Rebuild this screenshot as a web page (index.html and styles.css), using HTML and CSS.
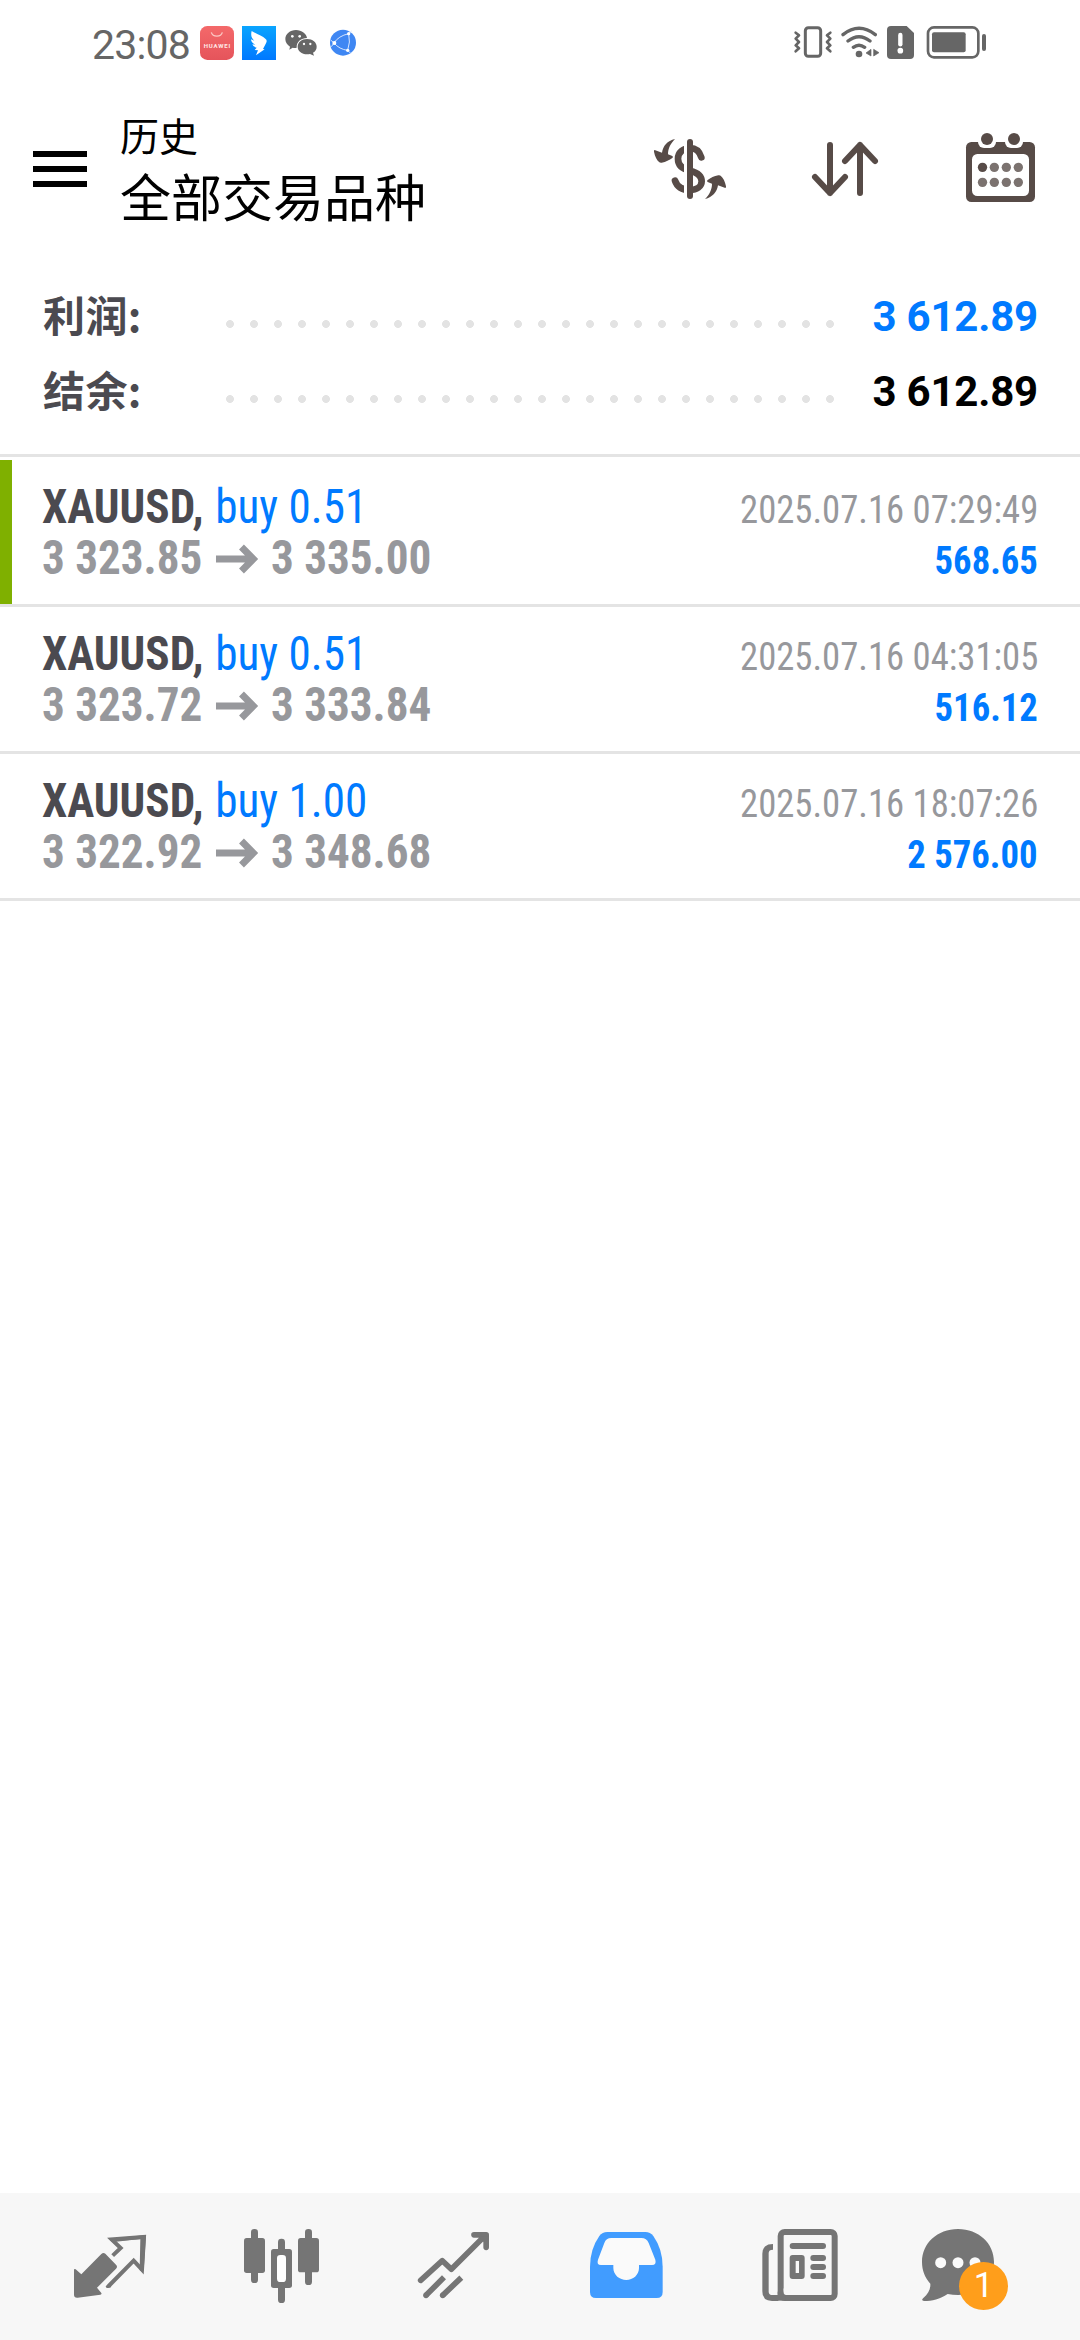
FILE: index.html
```html
<!DOCTYPE html>
<html lang="zh-CN">
<head>
<meta charset="utf-8">
<title>历史</title>
<link rel="stylesheet" href="styles.css">
</head>
<body>
<div class="screen">
  <div class="status">
    <span class="clock">23:08</span>
    <div class="status-group">
      <svg width="34" height="36" viewBox="360 45 102 108">
        <defs><linearGradient id="hw" x1="0" y1="0" x2="0" y2="1"><stop offset="0" stop-color="#f4696a"/><stop offset="1" stop-color="#e5545b"/></linearGradient></defs>
        <rect x="360" y="48" width="102" height="102" rx="22" fill="url(#hw)"/>
        <path d="M394 67a17 15 0 0 0 33 0" fill="none" stroke="#fbc8c4" stroke-width="4"/>
        <text x="411" y="113" text-anchor="middle" class="hw-text" textLength="80">HUAWEI</text>
      </svg>
      <svg width="34" height="36" viewBox="486 45 102 108">
        <defs><linearGradient id="dt" x1="0" y1="0" x2="0" y2="1"><stop offset="0" stop-color="#0aa5ff"/><stop offset="1" stop-color="#0078ff"/></linearGradient></defs>
        <rect x="486" y="48" width="102" height="102" fill="url(#dt)"/>
        <path d="M515 63C530 72 548 78 556 86Q563 91 558 100L549 117L554 118L528 136L534 121L524 120L530 113Q520 112 517 103L526 104Q513 98 513 88L523 92Q510 82 515 63Z" fill="#fff"/>
      </svg>
      <svg width="34" height="36" viewBox="612 45 102 108">
        <path d="M648 60C665 60 680 72 681 84C664 84 649 95 650 113C646 115 642 114 638 113L628 119L630 110C621 104 616 97 616 87C616 72 630 60 648 60Z" fill="#666"/>
        <path d="M681 87C698 87 710 97 710 110C710 118 706 124 699 128L702 137L690 132C668 136 653 124 653 110C653 97 665 87 681 87Z" fill="#666"/>
        <g fill="#fff"><circle cx="637" cy="79" r="4"/><circle cx="659" cy="79" r="4"/><circle cx="672" cy="102" r="3.5"/><circle cx="691" cy="102" r="3.5"/></g>
      </svg>
      <svg width="34" height="36" viewBox="738 45 102 108">
        <circle cx="789" cy="98" r="39" fill="#3f87f3"/>
        <g fill="none" stroke="#d5e5ff" stroke-width="3"><path d="M752 90L762 99Q775 78 806 71L815 63M762 99Q778 118 803 121L812 130M806 71Q812 96 803 121M762 99L754 110"/></g>
        <g fill="#fff"><circle cx="763" cy="99" r="6"/><circle cx="806" cy="71" r="5"/><circle cx="803" cy="121" r="5"/></g>
      </svg>
    </div>
    <div class="status-group status-right">
      <svg width="40" height="36" viewBox="39 45 120 108">
        <g fill="none" stroke="#666" stroke-linejoin="round" stroke-linecap="round"><rect x="76" y="53" width="46" height="86" rx="9" stroke-width="9"/><path d="M47 68L57 76L47 86L57 96L47 106L57 115L47 124M151 68L141 76L151 86L141 96L151 106L141 115L151 124" stroke-width="8"/></g>
      </svg>
      <svg width="40" height="36" viewBox="180 45 120 108">
        <g fill="none" stroke="#666" stroke-width="10" stroke-linecap="round"><path d="M189 74Q237 36 286 74M204 93Q237 67 270 93M220 112Q237 99 254 112"/></g>
        <circle cx="237" cy="132" r="10" fill="#666"/><path d="M273 118V138L258 129ZM281 118V138L297 128Z" fill="#666" stroke="#666" stroke-width="2"/>
      </svg>
      <svg width="27" height="36" viewBox="321 45 81 108">
        <path d="M333 48H380L402 69V135Q402 147 390 147H333Q321 147 321 135V60Q321 48 333 48Z" fill="#666"/>
        <path d="M361 75V103" stroke="#fff" stroke-width="13" stroke-linecap="round"/><circle cx="361" cy="122" r="8.5" fill="#fff"/>
      </svg>
      <svg width="66" height="36" viewBox="423 45 198 108">
        <rect x="444" y="52" width="151" height="90" rx="18" fill="none" stroke="#666" stroke-width="8"/><rect x="456" y="67" width="101" height="60" rx="6" fill="#666"/><rect x="606" y="72" width="12" height="51" rx="6" fill="#666"/>
      </svg>
    </div>
  </div>

  <header class="header">
    <div class="menu"><i></i><i></i><i></i></div>
    <div class="titles">
      <div class="title">历史</div>
      <div class="subtitle">全部交易品种</div>
    </div>
    <div class="actions">
      <svg width="90" height="90" viewBox="45 42 270 270">
        <path d="M214 142C208 122 194 114 180 114C160 114 144 128 144 146C144 168 162 178 180 182C200 187 215 196 215 214C215 230 200 240 180 240C158 240 141 230 135 212" fill="none" stroke="#574b47" stroke-width="20" stroke-linecap="round"/>
        <rect x="162" y="90" width="10" height="174" fill="#fff"/>
        <rect x="171" y="87" width="18" height="180" rx="9" fill="#574b47"/>
        <path id="swap" d="M135 87C112 92 99 108 96 128L74 120Q71 121 72 125C75 140 80 150 88 157Q91 159 95 158C108 156 118 150 127 144Q131 141 127 138L114 133C114 115 122 100 135 87Z" fill="#574b47"/>
        <use href="#swap" transform="rotate(180 180 177)"/>
      </svg>
      <svg width="90" height="90" viewBox="513 42 270 270">
        <path d="M603 105V249M558 201L603 249L648 201M693 249V105M648 153L693 105L738 153" fill="none" stroke="#574b47" stroke-width="18" stroke-linecap="round" stroke-linejoin="round"/>
      </svg>
      <svg width="90" height="90" viewBox="975 42 270 270">
        <rect x="1008" y="96" width="207" height="180" rx="16" fill="#574b47"/>
        <rect x="1026" y="132" width="171" height="126" rx="16" fill="#fff"/>
        <rect x="1044" y="70" width="54" height="44" rx="18" fill="#fff"/><rect x="1125" y="70" width="54" height="44" rx="18" fill="#fff"/>
        <g fill="#574b47"><circle cx="1071" cy="87" r="18"/><circle cx="1152" cy="87" r="18"/><circle cx="1057.500" cy="172" r="14"/></g>
        <g fill="#7b726f"><circle cx="1093" cy="172" r="14"/><circle cx="1129" cy="172" r="14"/><circle cx="1165" cy="172" r="14"/><circle cx="1057.500" cy="217" r="14"/><circle cx="1093" cy="217" r="14"/><circle cx="1129" cy="217" r="14"/><circle cx="1165" cy="217" r="14"/></g>
      </svg>
    </div>
  </header>

  <section class="summary">
    <div class="sum-row"><span class="sum-label">利润:</span><span class="leader"></span><span class="sum-value blue">3 612.89</span></div>
    <div class="sum-row"><span class="sum-label">结余:</span><span class="leader"></span><span class="sum-value">3 612.89</span></div>
  </section>

  <main class="deals">
    <article class="deal marked">
      <div class="line"><span class="symbol"><b>XAUUSD,</b> <span class="side">buy 0.51</span></span><span class="time">2025.07.16 07:29:49</span></div>
      <div class="line"><span class="prices">3 323.85<svg class="arrow" width="45" height="30" viewBox="0 0 43 30" preserveAspectRatio="none"><path d="M0 15H38M26 3L38 15L26 27"/></svg>3 335.00</span><span class="profit">568.65</span></div>
    </article>
    <article class="deal">
      <div class="line"><span class="symbol"><b>XAUUSD,</b> <span class="side">buy 0.51</span></span><span class="time">2025.07.16 04:31:05</span></div>
      <div class="line"><span class="prices">3 323.72<svg class="arrow" width="45" height="30" viewBox="0 0 43 30" preserveAspectRatio="none"><path d="M0 15H38M26 3L38 15L26 27"/></svg>3 333.84</span><span class="profit">516.12</span></div>
    </article>
    <article class="deal">
      <div class="line"><span class="symbol"><b>XAUUSD,</b> <span class="side">buy 1.00</span></span><span class="time">2025.07.16 18:07:26</span></div>
      <div class="line"><span class="prices">3 322.92<svg class="arrow" width="45" height="30" viewBox="0 0 43 30" preserveAspectRatio="none"><path d="M0 15H38M26 3L38 15L26 27"/></svg>3 348.68</span><span class="profit">2 576.00</span></div>
    </article>
  </main>

  <nav class="tabs">
    <div class="tab">
      <svg viewBox="-48 39 516 441">
        <path d="M102 269Q103 265 107 268L124 283L184 222Q190 216 196 221L228 254Q234 260 228 266L171 323L184 339Q186 343 181 344L113 353Q102 354 102 344Z" fill="#757575"/>
        <path d="M218 227L242 204L215 178L312 171L306 269L281 242L206 318" fill="none" stroke="#757575" stroke-width="12"/>
        <path d="M209 176L318 165L311 272Q304 277 299 270L301 177L228 185L224 192L210 181ZM197 319Q202 313 206 312L214 320Q208 326 199 323Z" fill="#757575"/>
      </svg>
    </div>
    <div class="tab">
      <svg viewBox="468 39 516 441">
        <g fill="#757575"><rect x="633" y="147" width="21" height="162" rx="10"/><rect x="612" y="174" width="63" height="105" rx="8"/><rect x="714" y="176" width="21" height="50" rx="10"/><rect x="714" y="310" width="21" height="59" rx="10"/><rect x="693" y="207" width="63" height="117" rx="8"/><rect x="795" y="147" width="21" height="168" rx="10"/><rect x="774" y="174" width="63" height="103" rx="8"/></g>
        <rect x="711" y="225" width="27" height="81" rx="10" fill="#fff"/>
      </svg>
    </div>
    <div class="tab">
      <svg viewBox="-36 39 516 441">
        <path d="M122 301L187 242L214 268L314 168M282 164.500H318.500V202" fill="none" stroke="#757575" stroke-width="17" stroke-linecap="round" stroke-linejoin="round"/>
        <path d="M296 170H322V196Z" fill="#757575"/>
        <path d="M138 346L192 292M188 346L244 293" stroke="#757575" stroke-width="17"/><circle cx="138" cy="346" r="8.500" fill="#757575"/><circle cx="188" cy="346" r="8.500" fill="#757575"/>
      </svg>
    </div>
    <div class="tab">
      <svg viewBox="480 39 516 441">
        <path d="M682 156H796Q811 156 820 168Q848 208 848 260V336Q848 354 830 354H648Q630 354 630 336V260Q630 208 658 168Q667 156 682 156Z" fill="#419cff"/>
        <path d="M694 174H784Q800 174 806 189L826 239Q830 255 816 255H777V264C777 285 759 300 739 300C719 300 700 285 700 264V255H663Q649 255 654 239L673 189Q678 174 694 174Z" fill="#fafafa"/>
      </svg>
    </div>
    <div class="tab">
      <svg viewBox="-24 39 516 441">
        <path d="M159 192V209Q146 209 146 219V335Q146 345 158 345H175V363H156Q127 363 127 334V221Q127 192 159 192Z" fill="#757575"/>
        <rect x="182" y="156" width="162" height="198" rx="12" fill="none" stroke="#757575" stroke-width="18"/>
        <rect x="173" y="335" width="24" height="27" fill="#757575"/><rect x="191" y="320" width="20" height="25" rx="8" fill="#f7f7f7"/>
        <g fill="#757575"><rect x="209" y="189" width="109" height="18" rx="9"/><rect x="271" y="225" width="47" height="18" rx="9"/><rect x="271" y="252" width="47" height="18" rx="9"/><rect x="271" y="279" width="47" height="18" rx="9"/><path fill-rule="evenodd" d="M218 225H245Q254 225 254 234V288Q254 297 245 297H218Q209 297 209 288V234Q209 225 218 225ZM227 243V279H237V243Z"/></g>
      </svg>
    </div>
    <div class="tab chat">
      <svg viewBox="492 39 516 441">
        <path d="M714 147C776 147 822 190 822 246C822 302 776 345 714 345Q698 345 683 342C660 358 636 363 612 363Q602 361 610 354C625 341 632 328 631 311C614 293 606 270 606 246C606 190 652 147 714 147Z" fill="#757575"/>
        <g fill="#fafafa"><circle cx="662" cy="248" r="16.500"/><circle cx="714" cy="248" r="16.500"/><circle cx="765" cy="248" r="16.500"/></g>
      </svg>
      <span class="badge">1</span>
    </div>
  </nav>
</div>
</body>
</html>
```
FILE: styles.css
```css
* { box-sizing: border-box; }
body { margin: 0; background: #fff; font-family: Roboto, "Noto Sans CJK SC", sans-serif; color: #000; }
svg { display: block; flex: none; }
.screen { width: 1080px; height: 2340px; display: flex; flex-direction: column; overflow: hidden; }

.status { height: 86px; display: flex; align-items: center; padding: 0 93px 0 92px; }
.clock { width: 108px; padding-top: 3px; font-size: 41px; line-height: 48px; letter-spacing: -0.8px; color: #666; }
.status-group { display: flex; gap: 8px; }
.status-right { margin-left: auto; gap: 7px; }
.hw-text { font: 700 18px Roboto, sans-serif; fill: #ffe9e7; }

.header { height: 166px; display: flex; align-items: center; padding: 0 35px 0 33px; }
.menu { width: 54px; display: flex; flex-direction: column; gap: 9px; }
.menu i { height: 6px; background: #000; }
.titles { margin-left: 33px; padding-bottom: 4px; font-family: "Noto Sans CJK SC", sans-serif; }
.title { font-size: 39px; line-height: 56px; }
.subtitle { font-size: 51px; line-height: 66px; }
.actions { margin-left: auto; display: flex; gap: 65px; }

.summary { height: 205px; padding: 26px 42px 0; border-bottom: 3px solid #e4e4e4; }
.sum-row { height: 75px; display: flex; align-items: center; }
.sum-label { width: 176px; padding: 0 0 3px 1px; font: 700 42px/72px "Noto Sans CJK SC", sans-serif; letter-spacing: 0.4px; color: #4b4a50; }
.leader { width: 624px; height: 8px; margin-top: 17px; background: radial-gradient(circle at 12px 4px, #e3e3e3 3.6px, transparent 4.2px) 0 0 / 24px 8px repeat-x; }
.sum-value { margin-left: auto; padding-top: 1px; font-size: 42px; font-weight: 700; letter-spacing: -0.2px; }
.blue { color: #007aff; }

.deals { flex: 1; padding-top: 3px; font-family: "Roboto Condensed", Roboto, sans-serif; }
.deal { height: 147px; padding: 21px 42px 0; border-bottom: 3px solid #e4e4e4; }
.marked { background: linear-gradient(#7fb000, #7fb000) 0 0 / 12px 144px no-repeat; }
.line { height: 51px; display: flex; align-items: baseline; justify-content: space-between; line-height: 51px; white-space: nowrap; }
.line > span { transform: scaleX(0.94); }
.symbol, .prices { font-size: 48px; transform-origin: left; }
.time, .profit { font-size: 39px; transform-origin: right; }
.symbol b { color: #4b4a50; }
.side { margin-left: 1.5px; color: #007aff; }
.prices { font-weight: 700; color: #97989c; }
.arrow { display: inline-block; margin: 0 14px; fill: none; stroke: #97989c; stroke-width: 7; }
.time { color: #97989c; }
.profit { font-weight: 700; color: #007aff; }

.tabs { height: 147px; display: grid; grid-template-columns: repeat(6, 172px); justify-content: center; background: #f7f7f7; }
.tab svg { width: 172px; height: 147px; }
.chat { position: relative; }
.badge { position: absolute; left: 75px; top: 69px; width: 49px; height: 48px; border-radius: 50%; background: #ff9e1b; color: #fff; font-size: 35px; line-height: 48px; text-align: center; }
```
